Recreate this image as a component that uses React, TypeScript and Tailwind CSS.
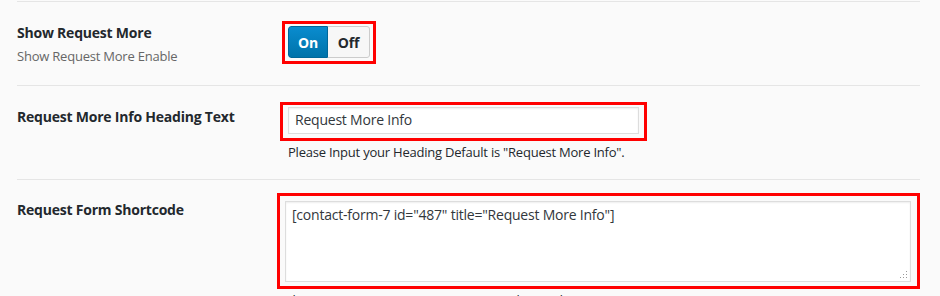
import React from "react";

const font = { fontFamily: '"Segoe UI", "Open Sans", "Noto Sans", sans-serif', letterSpacing: "-0.22px" };

export default function App() {
  return (
    <div className="w-[940px] h-[296px] overflow-hidden bg-[#fafafa] text-[#23282d]" style={font}>
      <div className="ml-[17px] w-[903px] pt-[1px]">
        {/* Row 1 */}
        <div className="flex h-[84px] border-t border-[#e5e5e5]">
          <div className="w-[271px] pt-[21px]">
            <div className="text-[14px] leading-[20px] font-bold text-[#23282d]">Show Request More</div>
            <div className="mt-[4px] text-[13px] leading-[18px] text-[#666]">Show Request More Enable</div>
          </div>
          <div className="pt-[19px]">
            <div className="ml-[-6px] border-[3px] border-[#ff0000] pl-[3px] pr-[3px] pt-[2px] pb-[3px] w-[94px] h-[43px]">
              <div className="flex h-[32px] w-[82px] rounded-[3px] overflow-hidden text-[14px] font-bold">
                <div className="w-[40px] flex items-center justify-center text-white bg-gradient-to-b from-[#0a8ccf] to-[#0073aa] border border-[#006799] rounded-l-[3px]">
                  On
                </div>
                <div className="w-[42px] flex items-center justify-center text-[#23282d] bg-[#f7f7f7] border border-l-0 border-[#ccc] rounded-r-[3px]">
                  Off
                </div>
              </div>
            </div>
          </div>
        </div>
        {/* Row 2 */}
        <div className="flex h-[94px] border-t border-[#e5e5e5]">
          <div className="w-[271px] pt-[21px]">
            <div className="text-[14px] leading-[20px] font-bold text-[#23282d]">Request More Info Heading Text</div>
          </div>
          <div className="pt-[16px]">
            <div className="ml-[-8px] w-[367px] h-[39px] border-[3px] border-[#ff0000] pl-[5px] pt-[2px]">
              <div className="w-[351px] h-[27px] bg-white border border-[#ddd] shadow-[inset_0_1px_2px_rgba(0,0,0,0.07)] px-[6px] text-[14px] leading-[24px] text-[#32373c]">
                Request More Info
              </div>
            </div>
            <div className="mt-[2px] text-[13px] leading-[18px] text-[#23282d]">
              Please Input your Heading Default is "Request More Info".
            </div>
          </div>
        </div>
        {/* Row 3 */}
        <div className="flex border-t border-[#e5e5e5]">
          <div className="w-[271px] pt-[20px]">
            <div className="text-[14px] leading-[20px] font-bold text-[#23282d]">Request Form Shortcode</div>
          </div>
          <div className="pt-[13px]">
            <div className="ml-[-8px] w-[643px] h-[96px] border-[3px] border-[#ff0000] pl-[5px] pt-[5px]">
              <div className="relative w-[626px] h-[81px] bg-white border border-[#ddd] shadow-[inset_0_1px_2px_rgba(0,0,0,0.07)] px-[6px] pt-[3px] text-[14px] leading-[20px] text-[#32373c]">
                [contact-form-7 id="487" title="Request More Info"]
                <svg className="absolute right-[2px] bottom-[2px]" width="8" height="8" viewBox="0 0 8 8">
                  <rect x="6" y="0" width="1" height="1" fill="#999" />
                  <rect x="3" y="3" width="1" height="1" fill="#999" />
                  <rect x="6" y="3" width="1" height="1" fill="#999" />
                  <rect x="0" y="6" width="1" height="1" fill="#999" />
                  <rect x="3" y="6" width="1" height="1" fill="#999" />
                  <rect x="6" y="6" width="1" height="1" fill="#999" />
                </svg>
              </div>
            </div>
            <div className="mt-[2px] text-[13px] leading-[18px] text-[#23282d]">
              Please Input your Request More Form Shortcode Contact Form 7.
            </div>
          </div>
        </div>
      </div>
    </div>
  );
}
